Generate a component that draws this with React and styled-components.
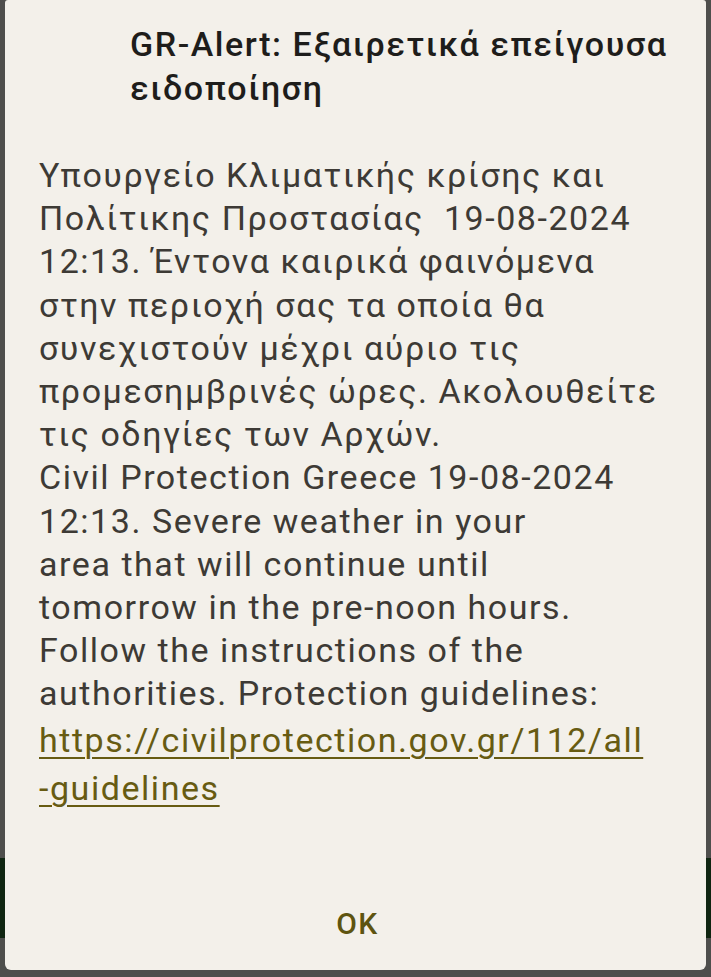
import React from "react";
import styled, { createGlobalStyle } from "styled-components";

const GlobalStyle = createGlobalStyle`
	html, body {
		margin: 0;
		padding: 0;
		height: 100%;
		overflow: hidden;
		background: #4e4e4c;
	}
	#root {
		height: 100%;
	}
`;

const bodyLines = [
	"Υπουργείο Κλιματικής κρίσης και",
	"Πολίτικης Προστασίας  19-08-2024",
	"12:13. Έντονα καιρικά φαινόμενα",
	"στην περιοχή σας τα οποία θα",
	"συνεχιστούν μέχρι αύριο τις",
	"προμεσημβρινές ώρες. Ακολουθείτε",
	"τις οδηγίες των Αρχών.",
	"Civil Protection Greece 19-08-2024",
	"12:13. Severe weather in your",
	"area that will continue until",
	"tomorrow in the pre-noon hours.",
	"Follow the instructions of the",
	"authorities. Protection guidelines:",
];

function App() {
	return (
		<>
			<GlobalStyle />
			<Screen>
				<Dialog>
					<Title>
						GR-Alert: Εξαιρετικά επείγουσα
						<br />
						ειδοποίηση
					</Title>
					<Message>
						{bodyLines.map((line, i) => (
							<Line key={i}>{line}</Line>
						))}
						<LinkLine>
							<Link href="#">https://civilprotection.gov.gr/112/all</Link>
						</LinkLine>
						<LinkLine>
							<Link href="#">-guidelines</Link>
						</LinkLine>
					</Message>
					<Actions>
						<OkButton>OK</OkButton>
					</Actions>
				</Dialog>
			</Screen>
		</>
	);
}

export default App;

const Screen = styled.div`
	height: 100%;
	padding: 0 5px 7px 5px;
	box-sizing: border-box;
	display: flex;
	flex-direction: column;
	background: linear-gradient(
		to bottom,
		#4e4e4c 0,
		#4e4e4c 858px,
		#0f2511 858px,
		#0f2511 938px,
		#4e4e4c 938px
	);
`;

const Dialog = styled.div`
	flex: 1;
	background: #f3f0ea;
	border-radius: 3px 3px 6px 6px;
	display: flex;
	flex-direction: column;
	font-family: Roboto, "Noto Sans", sans-serif;
	letter-spacing: 1.55px;
`;

const Title = styled.h1`
	margin: 0;
	padding: 22px 10px 0 125px;
	font-size: 34px;
	font-weight: 500;
	line-height: 44px;
	color: #1e1d1b;
	white-space: nowrap;
`;

const Message = styled.div`
	padding: 44px 0 0 34px;
	font-size: 34px;
	line-height: 43.2px;
	color: #3d3a35;
`;

const Line = styled.div`
	white-space: pre;
`;

const LinkLine = styled(Line)`
	line-height: 48px;
`;

const Link = styled.a`
	color: #675b12;
	text-decoration: underline;
	text-underline-offset: 5px;
	text-decoration-thickness: 2px;
`;

const Actions = styled.div`
	margin-top: auto;
	display: flex;
	justify-content: center;
	padding-bottom: 22px;
`;

const OkButton = styled.button`
	background: none;
	border: none;
	font-family: Roboto, sans-serif;
	font-size: 30px;
	font-weight: 500;
	letter-spacing: 1.5px;
	line-height: 36px;
	color: #5e5410;
	padding: 6px 16px;
	margin-left: 4px;
	cursor: pointer;
`;
